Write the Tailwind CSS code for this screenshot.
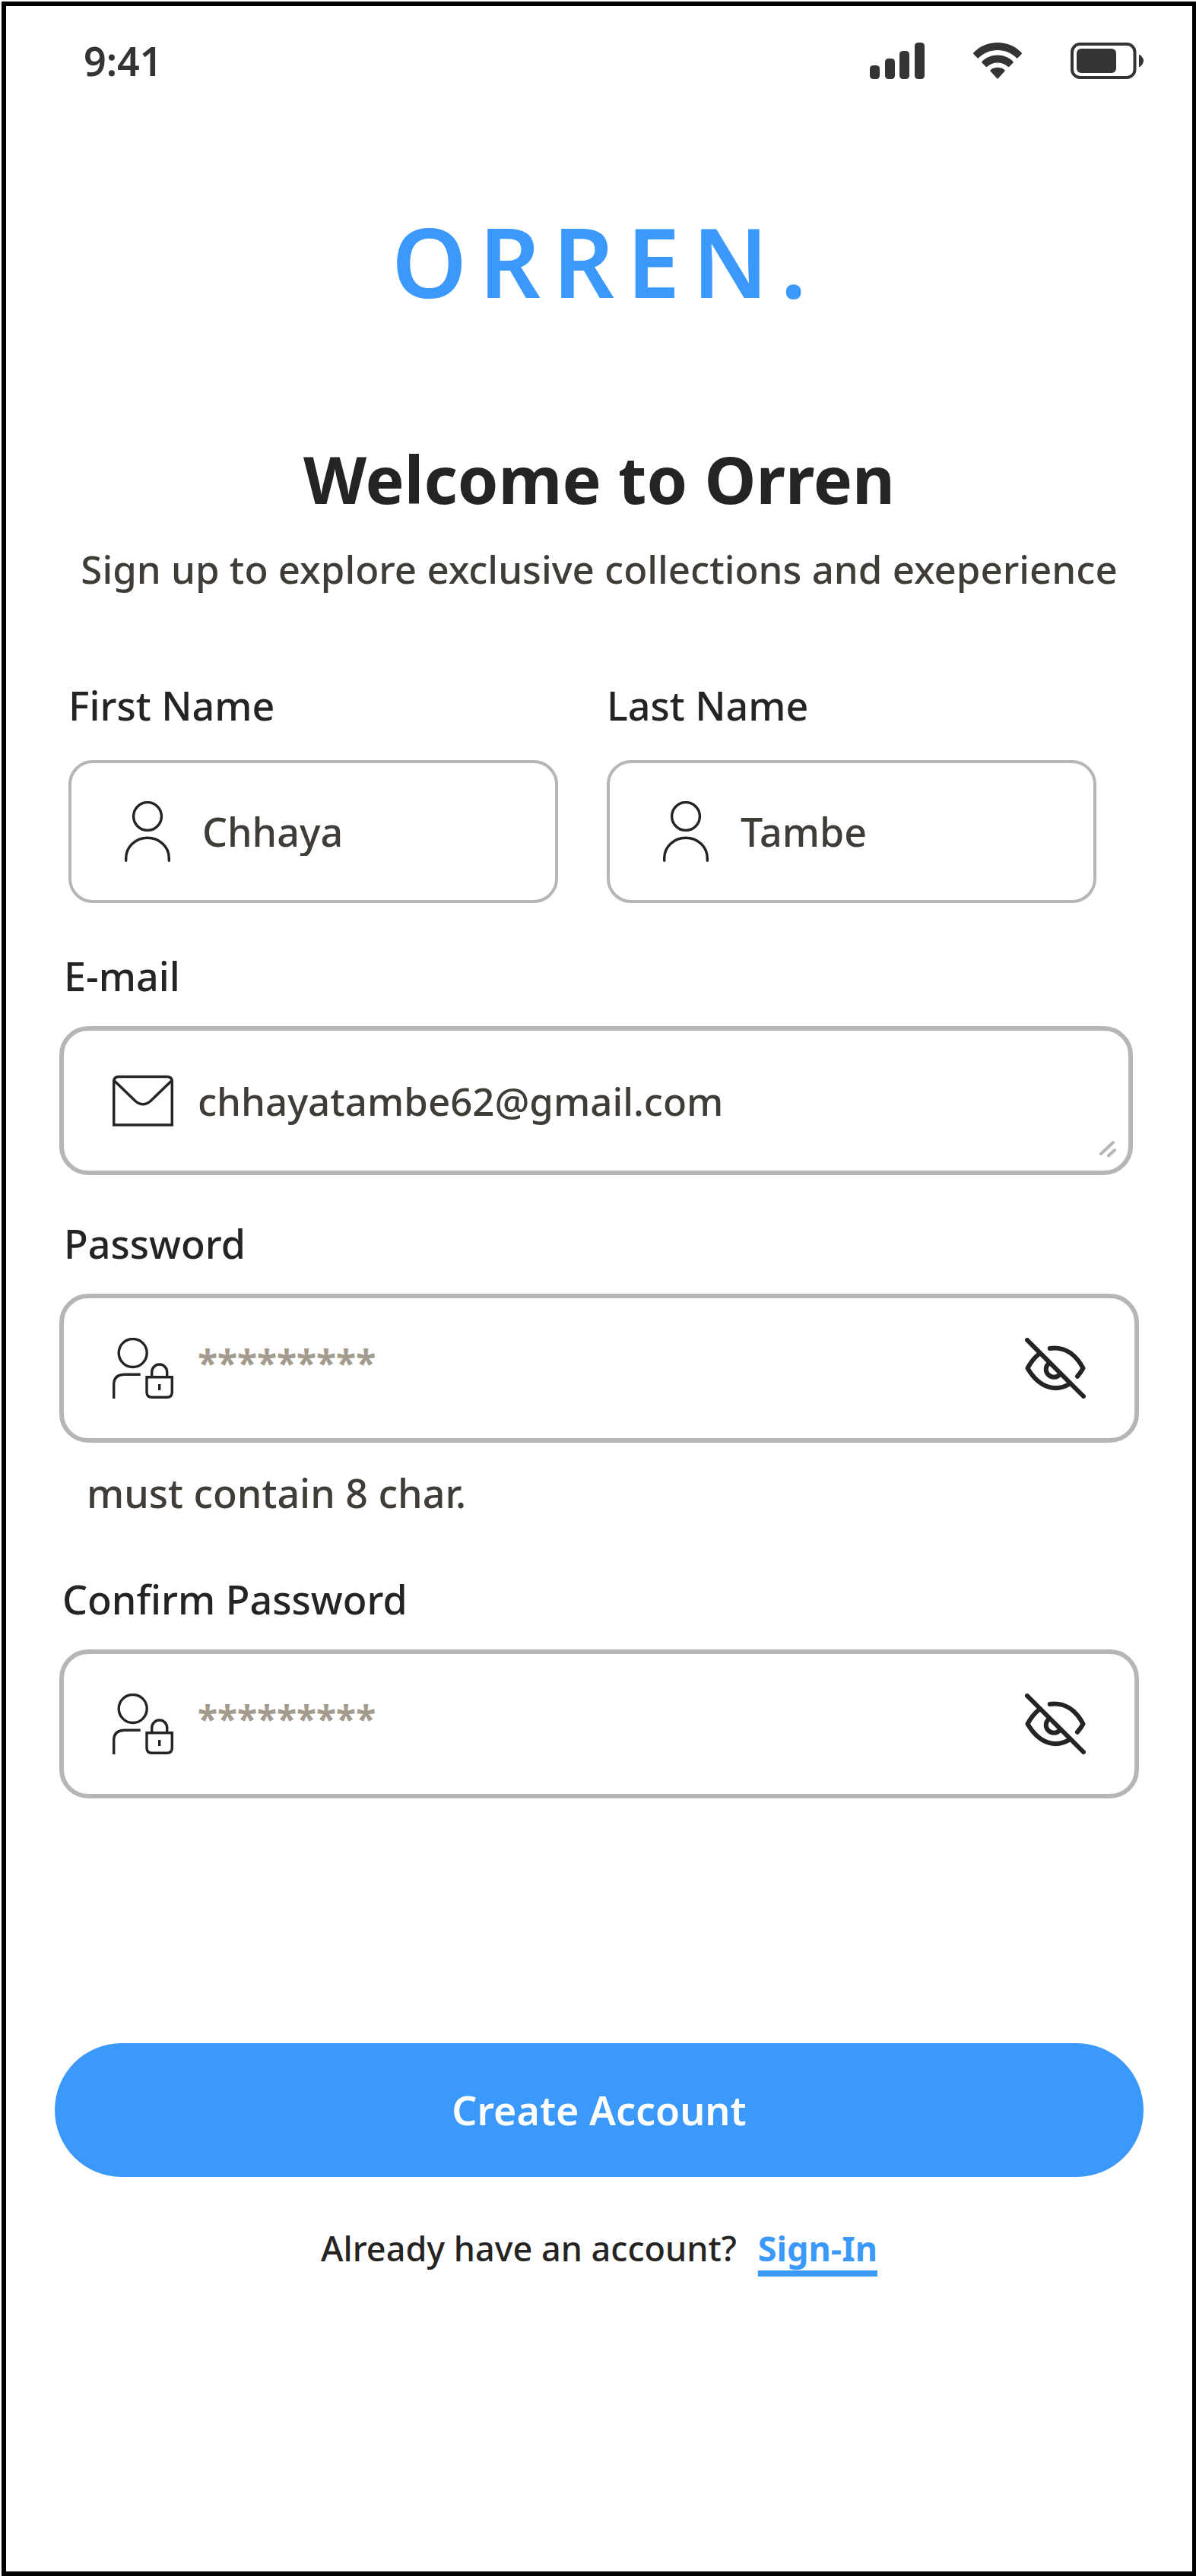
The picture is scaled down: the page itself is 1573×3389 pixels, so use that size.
<!DOCTYPE html>
<html lang="en">
<head>
<meta charset="utf-8">
<meta name="viewport" content="width=device-width, initial-scale=1">
<title>Orren – Sign up</title>
<script src="https://cdn.jsdelivr.net/npm/@tailwindcss/browser@4"></script>
</head>
<body class="flex min-h-screen bg-white pt-[2px] pl-[2px] font-['Noto_Sans',sans-serif] text-[52px] leading-16 font-medium text-[#252422]">
<svg class="hidden" aria-hidden="true">
  <symbol id="user" viewBox="0 0 80 80" fill="none" stroke="currentColor" stroke-width="3.4" stroke-linecap="round">
    <circle cx="40" cy="20" r="18.4"/>
    <path d="M11.7 78.300V75A28.300 26.800 0 0 1 68.300 75V78.300"/>
  </symbol>
  <symbol id="user-lock" viewBox="0 0 80 80" fill="none" stroke="currentColor" stroke-width="3.4">
    <circle cx="26.700" cy="20" r="18.500"/>
    <path d="M1.700 80V61.500Q1.700 48.300 16.500 48.300H36.700"/>
    <path d="M45 51.700H78.300V71.500Q78.300 78.300 71.500 78.300H51.800Q45 78.300 45 71.500Z"/>
    <path d="M51.700 51V45A10 10 0 0 1 71.700 45V51M61.700 61V69"/>
  </symbol>
  <symbol id="eye-off" viewBox="0 0 80 80" fill="none" stroke="currentColor" stroke-width="6" stroke-linecap="round" stroke-linejoin="round">
    <path d="M3 3L77 77"/>
    <path d="M32.700 14C52 11 67 22 76.500 40Q73.500 45.500 69 50.700"/>
    <path d="M19.300 20.500Q9.500 28.500 3.500 40C20 68 42 71 59 60.500"/>
    <path d="M31.500 33.500A10.300 10.300 0 1 0 46 48"/>
  </symbol>
</svg>

<main class="flex grow flex-col border-6 border-r-[5px] border-black">
  <header class="flex items-center justify-between pt-12 pr-16 pl-[102px] text-[#343532]">
    <time class="leading-12 font-semibold">9:41</time>
    <div class="flex gap-16">
      <svg class="h-12 w-[72px]" viewBox="0 0 72 48" fill="currentColor" role="img" aria-label="Signal">
        <rect y="30" width="13" height="18" rx="4.500"/>
        <rect x="20" y="21" width="13" height="27" rx="4.500"/>
        <rect x="39" y="11" width="13" height="37" rx="4.500"/>
        <rect x="59" width="13" height="48" rx="4.500"/>
      </svg>
      <svg class="h-12 w-16" viewBox="0 0 64 48" fill="currentColor" role="img" aria-label="Wi-Fi">
        <path d="M32 0C44.500 0 55.500 5 63.300 13Q64.500 14.200 63.300 15.400L58.500 20.300Q57.700 21 57 20.300C50.500 13.800 42 10 32 10S13.500 13.800 7 20.300Q6.300 21 5.500 20.300L.700 15.400Q-.500 14.200 .700 13C8.500 5 19.500 0 32 0Z"/>
        <path d="M32 16.500C40 16.500 47 19.500 52.300 24.700Q53.200 25.700 52.300 26.700L47.300 31.800Q46.500 32.500 45.700 31.800C42 28.500 37.500 26.500 32 26.500S22 28.500 18.300 31.800Q17.500 32.500 16.700 31.800L11.700 26.700Q10.800 25.700 11.700 24.700C17 19.500 24 16.500 32 16.500Z"/>
        <path d="M32 32.800C35.500 32.800 38.700 33.900 41.300 35.900Q42.300 36.700 41.300 37.800L32.700 47.200Q32 48 31.300 47.200L22.700 37.800Q21.700 36.700 22.700 35.900C25.300 33.900 28.500 32.800 32 32.800Z"/>
      </svg>
      <svg class="h-12 w-24" viewBox="0 0 96 48" fill="currentColor" role="img" aria-label="Battery">
        <rect x="2" y="2" width="82.500" height="44" rx="10.500" fill="none" stroke="currentColor" stroke-width="4"/>
        <rect x="8" y="8" width="52" height="32" rx="6"/>
        <path d="M90 15.500Q96 19 96 24T90 32.500Z"/>
      </svg>
    </div>
  </header>

  <p class="mt-[175px] pl-4 text-center text-[126px] leading-32 font-semibold tracking-[16px] text-[#3C99FC]">ORREN.</p>
  <h1 class="mt-[175px] text-center text-[86px] leading-24 font-bold">Welcome to Orren</h1>
  <p class="mt-[38px] text-center text-[51px] text-[#403D39]">Sign up to explore exclusive collections and exeperience</p>

  <form class="mt-[116px] flex flex-col">
    <div class="grid grid-cols-2 gap-16 pr-[126px] pl-[82px]">
      <div class="flex flex-col gap-10">
        <label for="first">First Name</label>
        <div class="flex h-[188px] items-center gap-8 rounded-[32px] border-4 border-[#B6B6B6] pr-4 pl-[60px]">
          <svg class="size-20 shrink-0"><use href="#user"/></svg>
          <input id="first" type="text" value="Chhaya" class="h-16 w-full min-w-0 text-[#403D39] outline-none">
        </div>
      </div>
      <div class="flex flex-col gap-10">
        <label for="last">Last Name</label>
        <div class="flex h-[188px] items-center gap-8 rounded-[32px] border-4 border-[#B6B6B6] pr-4 pl-[60px]">
          <svg class="size-20 shrink-0"><use href="#user"/></svg>
          <input id="last" type="text" value="Tambe" class="h-16 w-full min-w-0 text-[#403D39] outline-none">
        </div>
      </div>
    </div>

    <div class="mt-16 flex flex-col gap-[34px] pr-[78px] pl-[70px]">
      <label for="email" class="pl-[6px]">E-mail</label>
      <div class="relative flex h-[196px] items-center gap-8 rounded-[38px] border-6 border-[#B6B6B6] px-16">
        <svg class="size-20 shrink-0" viewBox="0 0 80 80" fill="none" stroke="currentColor" stroke-width="3.500">
          <path d="M1.700 72V15Q1.700 8.500 8.500 8.500H71.500Q78.300 8.500 78.300 15V72Z"/>
          <path d="M2.500 14L30 40.500Q40 49 50 40.500L77.500 14"/>
        </svg>
        <textarea id="email" rows="1" class="h-20 w-full min-w-0 resize-none overflow-hidden py-2 text-[51px] text-[#403D39] outline-none">chhayatambe62@gmail.com</textarea>
        <svg class="absolute right-4 bottom-4 h-6 w-[22px]" viewBox="0 0 22 24" fill="none" stroke="#B6B6B6" stroke-width="4" stroke-linecap="round"><path d="M2 18L18 3M12 20.500L20 13"/></svg>
      </div>
    </div>

    <div class="mt-[58px] flex flex-col gap-[34px] px-[70px]">
      <label for="password" class="pl-[6px]">Password</label>
      <div class="flex h-[196px] items-center gap-8 rounded-[38px] border-6 border-[#B6B6B6] px-16">
        <svg class="size-20 shrink-0"><use href="#user-lock"/></svg>
        <input id="password" type="password" placeholder="*********" class="h-20 w-full min-w-0 pb-4 text-5xl leading-16 font-bold outline-none placeholder:text-[#A39C8E]">
        <button type="button" aria-label="Show password" class="shrink-0"><svg class="size-20"><use href="#eye-off"/></svg></button>
      </div>
      <p class="pl-9 text-[#403D39]">must contain 8 char.</p>
    </div>

    <div class="mt-[76px] flex flex-col gap-[34px] px-[70px]">
      <label for="confirm" class="pl-1">Confirm Password</label>
      <div class="flex h-[196px] items-center gap-8 rounded-[38px] border-6 border-[#B6B6B6] px-16">
        <svg class="size-20 shrink-0"><use href="#user-lock"/></svg>
        <input id="confirm" type="password" placeholder="*********" class="h-20 w-full min-w-0 pb-4 text-5xl leading-16 font-bold outline-none placeholder:text-[#A39C8E]">
        <button type="button" aria-label="Show password" class="shrink-0"><svg class="size-20"><use href="#eye-off"/></svg></button>
      </div>
    </div>

    <button type="submit" class="mx-16 mt-[322px] h-44 rounded-full bg-[#3C99FC] font-semibold text-white">Create Account</button>
  </form>

  <p class="mt-[62px] flex justify-center gap-7 text-[45px]">
    <span>Already have an account?</span>
    <a href="#" class="font-bold text-[#3C99FC] underline decoration-8 underline-offset-12 [text-decoration-skip-ink:none]">Sign-In</a>
  </p>
</main>
</body>
</html>
